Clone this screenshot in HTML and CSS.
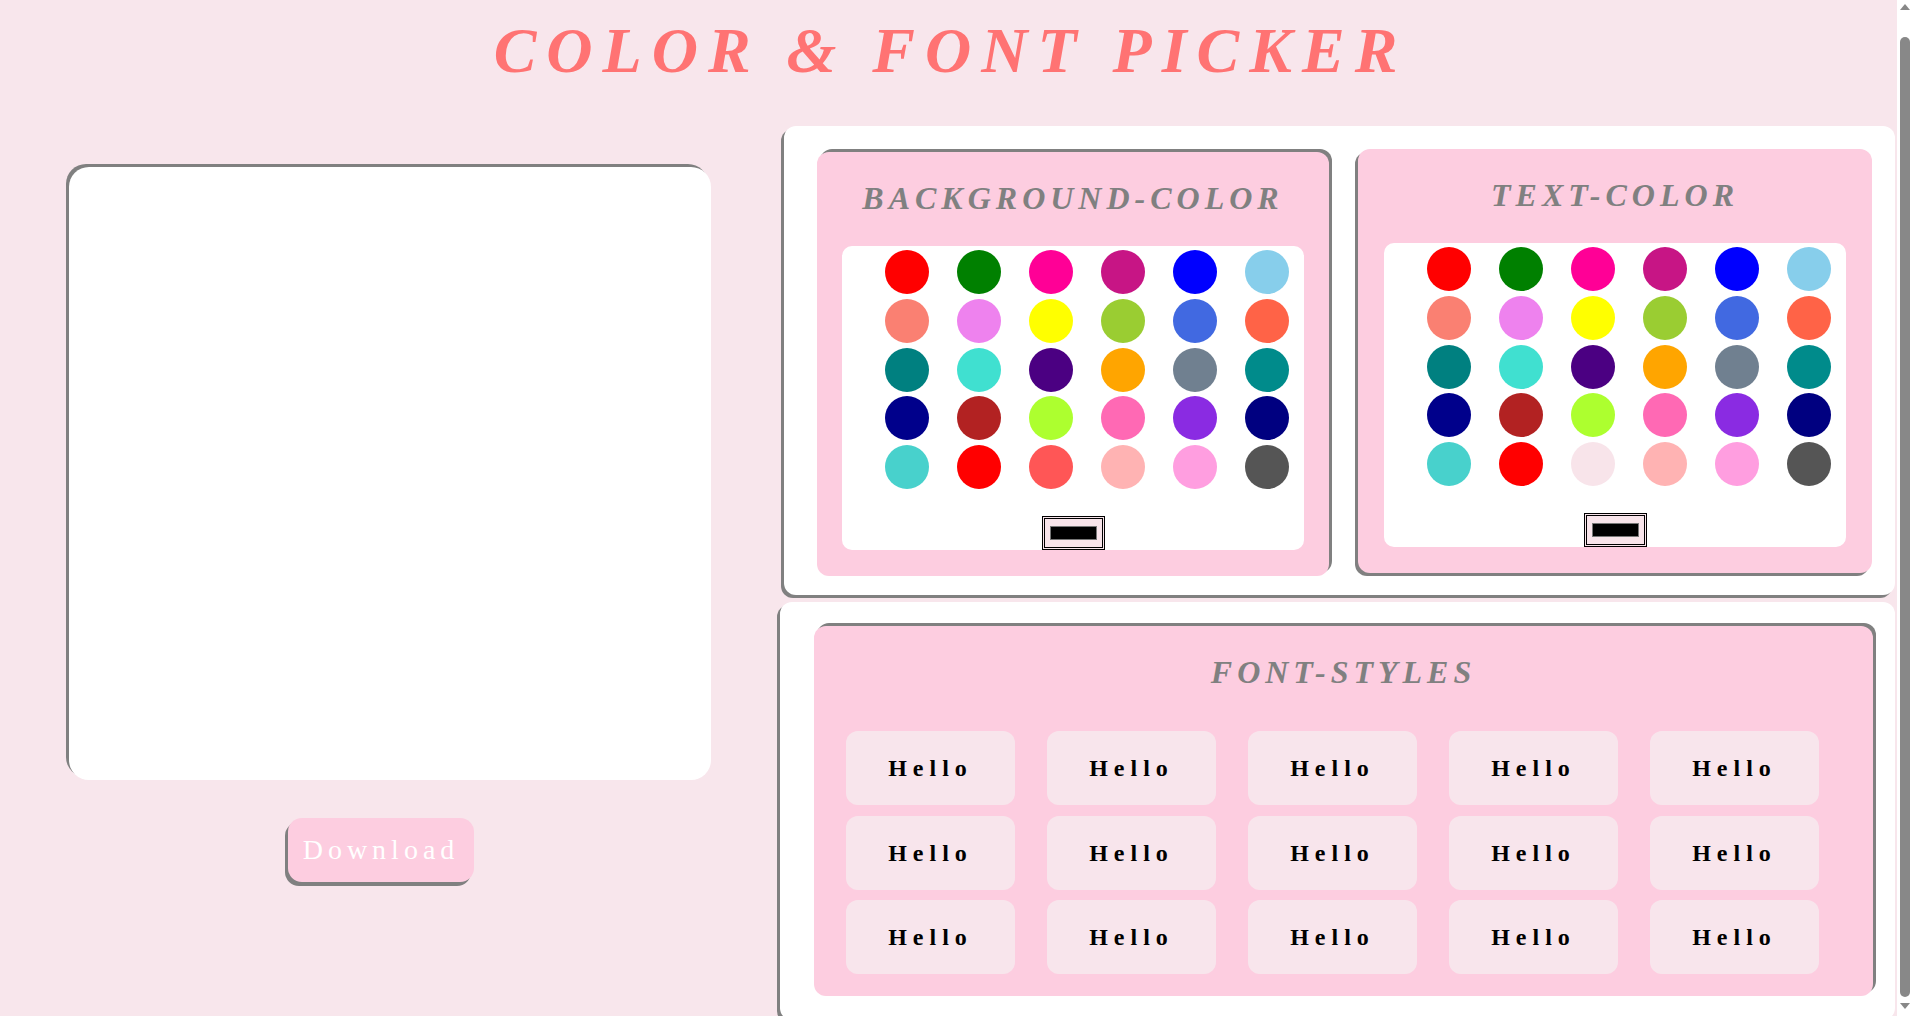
FILE: index.html
```html
<!DOCTYPE html>
<html lang="en">
<head>
<meta charset="utf-8">
<title>Color &amp; Font Picker</title>
<link rel="stylesheet" href="styles.css">
</head>
<body>
<header class="top">
  <h1 class="title">COLOR &amp; FONT PICKER</h1>
</header>
<main class="layout">
  <section class="left">
    <div class="preview"></div>
    <button class="download">Download</button>
  </section>
  <section class="right">
    <div class="panel panel-colors">
      <div class="card card-bg">
        <h2 class="card-title">BACKGROUND-COLOR</h2>
        <div class="palette">
          <div class="dots">
            <span class="dot" style="background:#ff0000"></span>
            <span class="dot" style="background:#008000"></span>
            <span class="dot" style="background:#ff0096"></span>
            <span class="dot" style="background:#c71585"></span>
            <span class="dot" style="background:#0000ff"></span>
            <span class="dot" style="background:#87ceeb"></span>
            <span class="dot" style="background:#fa8072"></span>
            <span class="dot" style="background:#ee82ee"></span>
            <span class="dot" style="background:#ffff00"></span>
            <span class="dot" style="background:#9acd32"></span>
            <span class="dot" style="background:#4169e1"></span>
            <span class="dot" style="background:#ff6347"></span>
            <span class="dot" style="background:#008080"></span>
            <span class="dot" style="background:#40e0d0"></span>
            <span class="dot" style="background:#4b0082"></span>
            <span class="dot" style="background:#ffa500"></span>
            <span class="dot" style="background:#708090"></span>
            <span class="dot" style="background:#008b8b"></span>
            <span class="dot" style="background:#00008b"></span>
            <span class="dot" style="background:#b22222"></span>
            <span class="dot" style="background:#adff2f"></span>
            <span class="dot" style="background:#ff69b4"></span>
            <span class="dot" style="background:#8a2be2"></span>
            <span class="dot" style="background:#000080"></span>
            <span class="dot" style="background:#48d1cc"></span>
            <span class="dot" style="background:#ff0000"></span>
            <span class="dot" style="background:#ff5656"></span>
            <span class="dot" style="background:#ffb3b3"></span>
            <span class="dot" style="background:#ff9ee0"></span>
            <span class="dot" style="background:#555555"></span>
          </div>
          <div class="swatch"><span class="swatch-fill"></span></div>
        </div>
      </div>
      <div class="card card-text">
        <h2 class="card-title">TEXT-COLOR</h2>
        <div class="palette">
          <div class="dots">
            <span class="dot" style="background:#ff0000"></span>
            <span class="dot" style="background:#008000"></span>
            <span class="dot" style="background:#ff0096"></span>
            <span class="dot" style="background:#c71585"></span>
            <span class="dot" style="background:#0000ff"></span>
            <span class="dot" style="background:#87ceeb"></span>
            <span class="dot" style="background:#fa8072"></span>
            <span class="dot" style="background:#ee82ee"></span>
            <span class="dot" style="background:#ffff00"></span>
            <span class="dot" style="background:#9acd32"></span>
            <span class="dot" style="background:#4169e1"></span>
            <span class="dot" style="background:#ff6347"></span>
            <span class="dot" style="background:#008080"></span>
            <span class="dot" style="background:#40e0d0"></span>
            <span class="dot" style="background:#4b0082"></span>
            <span class="dot" style="background:#ffa500"></span>
            <span class="dot" style="background:#708090"></span>
            <span class="dot" style="background:#008b8b"></span>
            <span class="dot" style="background:#00008b"></span>
            <span class="dot" style="background:#b22222"></span>
            <span class="dot" style="background:#adff2f"></span>
            <span class="dot" style="background:#ff69b4"></span>
            <span class="dot" style="background:#8a2be2"></span>
            <span class="dot" style="background:#000080"></span>
            <span class="dot" style="background:#48d1cc"></span>
            <span class="dot" style="background:#ff0000"></span>
            <span class="dot" style="background:#f8e4ea"></span>
            <span class="dot" style="background:#ffb3b3"></span>
            <span class="dot" style="background:#ff9ee0"></span>
            <span class="dot" style="background:#555555"></span>
          </div>
          <div class="swatch"><span class="swatch-fill"></span></div>
        </div>
      </div>
    </div>
    <div class="panel panel-fonts">
      <div class="card card-font">
        <h2 class="card-title">FONT-STYLES</h2>
        <div class="tiles">
          <div class="tile">Hello</div>
          <div class="tile">Hello</div>
          <div class="tile">Hello</div>
          <div class="tile">Hello</div>
          <div class="tile">Hello</div>
          <div class="tile">Hello</div>
          <div class="tile">Hello</div>
          <div class="tile">Hello</div>
          <div class="tile">Hello</div>
          <div class="tile">Hello</div>
          <div class="tile">Hello</div>
          <div class="tile">Hello</div>
          <div class="tile">Hello</div>
          <div class="tile">Hello</div>
          <div class="tile">Hello</div>
        </div>
      </div>
    </div>
  </section>
</main>
<div class="scrollbar" aria-hidden="true">
  <span class="sb-up"></span>
  <span class="sb-thumb"></span>
  <span class="sb-down"></span>
</div>
</body>
</html>
```

FILE: styles.css
```css
html {
  scrollbar-color: #888 #fff;
}

body {
  margin: 0 15px 0 0;
  background: #f8e6ec;
  font-family: "Liberation Serif", "Times New Roman", serif;
}

.top {
  height: 126px;
}

.title {
  margin: 0;
  padding: 14px 0 0 4px;
  line-height: 74px;
  text-align: center;
  font-size: 64px;
  font-style: italic;
  font-weight: bold;
  letter-spacing: 10px;
  color: #ff7373;
}

.layout {
  display: flex;
  padding-bottom: 20px;
}

.left {
  width: 780px;
  flex: none;
  padding-top: 41px;
  display: flex;
  flex-direction: column;
  align-items: center;
}

.preview {
  width: 642px;
  height: 613px;
  background: #fff;
  border-radius: 20px;
  box-shadow: -3px -3px 0 #808080;
}

.download {
  margin-top: 38px;
  margin-right: 18px;
  width: 186px;
  height: 64px;
  padding: 0;
  border: 0;
  border-radius: 14px;
  background: #fdcde0;
  color: #fff;
  font-family: "Liberation Serif", "Times New Roman", serif;
  font-size: 28px;
  letter-spacing: 5px;
  box-shadow: -3px 4px 0 #808080;
}

.right {
  width: 1115px;
  flex: none;
}

.panel {
  background: #fff;
  border-radius: 12px;
  box-shadow: -3px 3px 0 #808080;
}

.panel-colors {
  margin-left: 4px;
  height: 469px;
  display: flex;
  align-items: flex-start;
}

.panel-fonts {
  margin-top: 7px;
  padding-top: 24px;
  padding-bottom: 24px;
}

.card {
  box-sizing: border-box;
  background: #fdcde0;
  border-radius: 12px;
  display: flex;
  flex-direction: column;
  align-items: center;
}

.card-bg {
  width: 512px;
  height: 424px;
  margin-left: 33px;
  margin-top: 26px;
  box-shadow: 3px -3px 0 #808080;
}

.card-text {
  width: 514px;
  height: 424px;
  margin-left: 29px;
  margin-top: 23px;
  box-shadow: -3px 3px 0 #808080;
}

.card-font {
  width: 1059px;
  height: 370px;
  margin-left: 34px;
  align-items: stretch;
  box-shadow: 3px -3px 0 #808080;
}

.card-title {
  margin: 28px 0 29px;
  line-height: 37px;
  font-size: 32px;
  font-style: italic;
  font-weight: bold;
  letter-spacing: 5px;
  color: #808080;
  text-align: center;
}

.palette {
  box-sizing: border-box;
  width: 462px;
  height: 304px;
  background: #fff;
  border-radius: 10px;
  display: flex;
  flex-direction: column;
}

.dots {
  margin: 4px 0 0 43px;
  display: grid;
  grid-template-columns: repeat(6, 44px);
  column-gap: 28px;
  row-gap: 4.75px;
}

.dot {
  display: block;
  width: 44px;
  height: 44px;
  border-radius: 50%;
}

.swatch {
  box-sizing: border-box;
  margin-top: auto;
  align-self: center;
  width: 63px;
  height: 34px;
  padding: 7px 5px;
  border: 3px double #000;
  background: #f8e4ea;
}

.swatch-fill {
  display: block;
  box-sizing: border-box;
  height: 100%;
  background: #000;
  border: 1px solid #777;
}

.tiles {
  margin: 11px 0 0 32px;
  display: grid;
  grid-template-columns: repeat(5, 169px);
  grid-auto-rows: 74px;
  column-gap: 32px;
  row-gap: 10.5px;
}

.tile {
  background: #f8e5ec;
  border-radius: 12px;
  line-height: 74px;
  text-align: center;
  font-size: 24px;
  font-weight: bold;
  letter-spacing: 6px;
  color: #000;
}

/* drawn window scrollbar (page overflows the viewport slightly) */
.scrollbar {
  position: fixed;
  top: 0;
  right: 0;
  width: 15px;
  height: 100vh;
  background: #fff;
  display: flex;
  flex-direction: column;
  align-items: center;
}

.sb-up,
.sb-down {
  width: 0;
  height: 0;
  border-left: 5px solid transparent;
  border-right: 5px solid transparent;
}

.sb-up {
  margin-top: 4px;
  border-bottom: 6px solid #888;
}

.sb-thumb {
  flex: 1;
  width: 10px;
  margin: 27px 0 6px;
  border-radius: 5px;
  background: #888;
}

.sb-down {
  margin-bottom: 7px;
  border-top: 6px solid #888;
}
```
